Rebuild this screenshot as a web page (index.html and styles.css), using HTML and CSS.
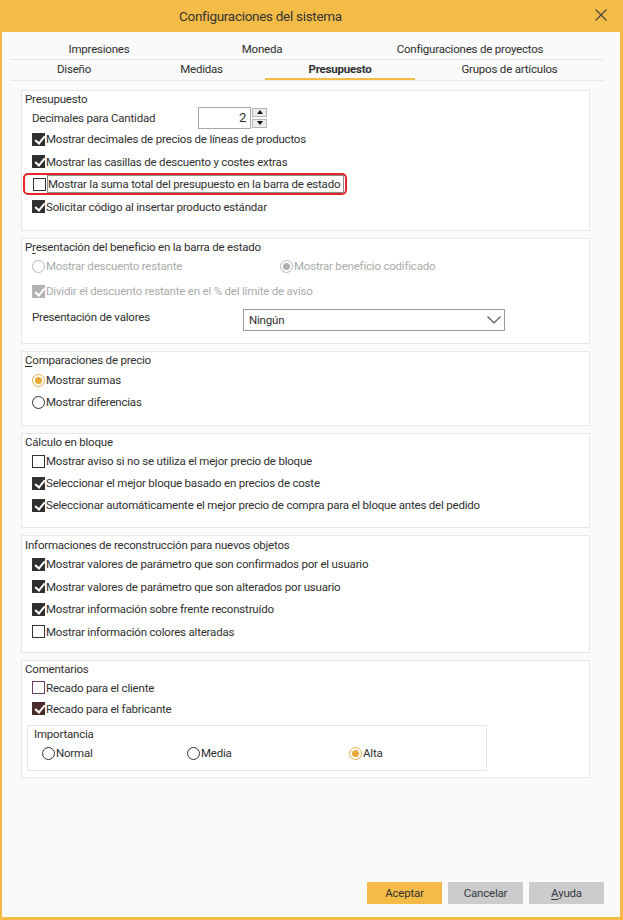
FILE: index.html
```html
<!DOCTYPE html>
<html lang="es">
<head>
  <meta charset="UTF-8" />
  <meta name="viewport" content="width=device-width, initial-scale=1.0" />
  <title>Configuraciones del sistema</title>
  <link rel="stylesheet" href="styles.css">
</head>
<body>
  <div class="dialog">
    <div class="titlebar">
      <span class="title">Configuraciones del sistema</span>
      <svg class="close" width="12" height="12" viewBox="0 0 12 12">
        <path d="M0.5 0.5 L11.5 11.5 M11.5 0.5 L0.5 11.5" stroke="#444" stroke-width="1.1" fill="none"/>
      </svg>
    </div>

    <div class="tabs">
      <div class="tab-row">
        <div class="tab w178">Impresiones</div>
        <div class="tab w148">Moneda</div>
        <div class="tab w268">Configuraciones de proyectos</div>
      </div>
      <div class="tab-row">
        <div class="tab w128">Diseño</div>
        <div class="tab w127">Medidas</div>
        <div class="tab w150 active">Presupuesto</div>
        <div class="tab w189">Grupos de artículos</div>
      </div>
    </div>

    <div class="content">
      <div class="group g-budget">
        <div class="group-title">Presupuesto</div>
        <div class="row spin-row">
          <span class="field-label">Decimales para Cantidad</span>
          <div class="spinner">
            <div class="spin-value">2</div>
            <div class="spin-buttons">
              <div class="spin-btn"><span class="tri up"></span></div>
              <div class="spin-btn"><span class="tri down"></span></div>
            </div>
          </div>
        </div>
        <div class="row"><span class="cb on"></span><span class="lbl">Mostrar decimales de precios de líneas de productos</span></div>
        <div class="row"><span class="cb on"></span><span class="lbl">Mostrar las casillas de descuento y costes extras</span></div>
        <div class="row highlight"><span class="cb"></span><span class="lbl focus">Mostrar la suma total del presupuesto en la barra de estado</span></div>
        <div class="row"><span class="cb on"></span><span class="lbl">Solicitar código al insertar producto estándar</span></div>
      </div>

      <div class="group g-benefit">
        <div class="group-title">P<u>r</u>esentación del beneficio en la barra de estado</div>
        <div class="row disabled">
          <div class="col-248"><span class="rb"></span><span class="lbl">Mostrar descuento restante</span></div>
          <div class="col"><span class="rb on"></span><span class="lbl">Mostrar beneficio codificado</span></div>
        </div>
        <div class="row disabled split"><span class="cb on"></span><span class="lbl">Dividir el descuento restante en el % del límite de aviso</span></div>
        <div class="select-row">
          <span class="select-label">Presentación de valores</span>
          <div class="select">
            <span>Ningún</span>
            <svg width="14" height="8" viewBox="0 0 14 8"><path d="M0.5 0.5 L7 7 L13.5 0.5" stroke="#555" stroke-width="1.1" fill="none"/></svg>
          </div>
        </div>
      </div>

      <div class="group">
        <div class="group-title"><u>C</u>omparaciones de precio</div>
        <div class="row first-short"><span class="rb on"></span><span class="lbl">Mostrar sumas</span></div>
        <div class="row tall"><span class="rb"></span><span class="lbl">Mostrar diferencias</span></div>
      </div>

      <div class="group">
        <div class="group-title">Cálculo en bloque</div>
        <div class="row"><span class="cb"></span><span class="lbl">Mostrar aviso si no se utiliza el mejor precio de bloque</span></div>
        <div class="row"><span class="cb on"></span><span class="lbl">Seleccionar el mejor bloque basado en precios de coste</span></div>
        <div class="row"><span class="cb on"></span><span class="lbl">Seleccionar automáticamente el mejor precio de compra para el bloque antes del pedido</span></div>
      </div>

      <div class="group g-rebuild">
        <div class="group-title">Informaciones de reconstrucción para nuevos objetos</div>
        <div class="row"><span class="cb on"></span><span class="lbl">Mostrar valores de parámetro que son confirmados por el usuario</span></div>
        <div class="row"><span class="cb on"></span><span class="lbl">Mostrar valores de parámetro que son alterados por usuario</span></div>
        <div class="row"><span class="cb on"></span><span class="lbl">Mostrar información sobre frente reconstruído</span></div>
        <div class="row"><span class="cb"></span><span class="lbl">Mostrar información colores alteradas</span></div>
      </div>

      <div class="group g-comments">
        <div class="group-title">Comentarios</div>
        <div class="row short"><span class="cb hover"></span><span class="lbl">Recado para el cliente</span></div>
        <div class="row short"><span class="cb on pressed"></span><span class="lbl">Recado para el fabricante</span></div>
        <div class="subgroup">
          <div class="group-title">Importancia</div>
          <div class="radio-line">
            <div class="col-145"><span class="rb"></span><span class="lbl">Normal</span></div>
            <div class="col-162"><span class="rb"></span><span class="lbl">Media</span></div>
            <div class="col"><span class="rb on"></span><span class="lbl">Alta</span></div>
          </div>
        </div>
      </div>
    </div>

    <div class="buttons">
      <div class="btn primary">Aceptar</div>
      <div class="btn">Cancelar</div>
      <div class="btn"><u>A</u>yuda</div>
    </div>
  </div>
</body>
</html>
```

FILE: styles.css
```css
* {
  box-sizing: border-box;
}
body {
  margin: 0;
  font-family: Roboto, "Liberation Sans", sans-serif;
  font-size: 11.5px;
  letter-spacing: -0.2px;
  color: #2f2f2f;
  background: #ffffff;
}
u {
  text-decoration-thickness: 1px;
  text-underline-offset: 2px;
}
.dialog {
  width: 623px;
  height: 920px;
  border: solid #f4bc47;
  border-width: 0 3px 3px 2px;
  background: #fafafa;
  display: flex;
  flex-direction: column;
}
.titlebar {
  height: 32px;
  background: #f4bc47;
  display: flex;
  align-items: center;
}
.title {
  margin-left: 177px;
  font-size: 13.5px;
  letter-spacing: -0.3px;
  color: #333;
}
.close {
  margin-left: auto;
  margin-right: 13px;
  margin-top: -3px;
}

/* tabs */
.tabs {
  margin: 7px 16px 0 8px;
}
.tab-row {
  display: flex;
  border-bottom: 1px solid #e8e8e8;
}
.tab {
  height: 20px;
  line-height: 20px;
  text-align: center;
  color: #2f2f2f;
}
.tab-row + .tab-row .tab {
  line-height: 19px;
}
.tab.active {
  font-weight: bold;
  box-shadow: inset 0 -2px 0 #f4bc47;
}
.w178 { width: 178px; }
.w148 { width: 148px; }
.w268 { width: 268px; }
.w128 { width: 128px; }
.w127 { width: 127px; }
.w150 { width: 150px; }
.w189 { width: 189px; }

/* groups */
.content {
  padding: 9px 30px 0 19px;
  display: flex;
  flex-direction: column;
  gap: 7px;
}
.group {
  background: #fff;
  border: 1px solid #e6e6e6;
  padding-bottom: 11px;
}
.group-title {
  height: 16px;
  line-height: 16px;
  padding-left: 3px;
  color: #2f2f2f;
}
.row {
  height: 22px;
  display: flex;
  align-items: center;
  padding-left: 10px;
}
.g-budget .row {
  height: 22.5px;
}
.g-budget .spin-row {
  height: 21px;
}
.g-budget {
  padding-bottom: 12px;
}
.g-rebuild {
  padding-top: 1px;
  padding-bottom: 9px;
}
.g-rebuild .row {
  height: 22.5px;
}
.row.tall {
  height: 24px;
}
.row.split {
  height: 24px;
  margin-top: 2px;
}
.row.short {
  height: 21px;
}
.row.first-short {
  height: 20px;
  margin-top: 2px;
}
.lbl {
  margin-left: 1px;
  white-space: nowrap;
}
.g-budget .row.highlight {
  width: 324px;
  height: 22px;
  margin: 0 0 0.5px 1px;
  padding-left: 8px;
  border: 2px solid #e3262b;
  border-radius: 5px;
}
.lbl.focus {
  border: 1px solid #8c8c8c;
  padding: 1px 0 1px 0;
  line-height: 14px;
  width: 297px;
}

/* check boxes */
.cb {
  width: 13px;
  height: 13px;
  flex: none;
  border: 1px solid #333;
  background: #fff;
  position: relative;
}
.cb.on {
  background: #2f2f2f;
}
.cb.on::after {
  content: "";
  position: absolute;
  left: 4px;
  top: 0px;
  width: 4px;
  height: 8px;
  border: solid #fff;
  border-width: 0 2px 2px 0;
  transform: rotate(40deg);
}
.cb.hover {
  border-color: #6b3d6b;
}
.cb.pressed {
  background: #4a2c2c;
  border-color: #4a2c2c;
}
.disabled {
  color: #ababab;
}
.disabled .cb {
  border-color: #b3b3b3;
}
.disabled .cb.on {
  background: #b3b3b3;
}

/* radio buttons */
.rb {
  width: 13px;
  height: 13px;
  flex: none;
  border: 1px solid #333;
  border-radius: 50%;
  background: #fff;
  position: relative;
}
.rb.on {
  border-color: #e5ad4a;
}
.rb.on::after {
  content: "";
  position: absolute;
  left: 2px;
  top: 2px;
  width: 7px;
  height: 7px;
  border-radius: 50%;
  background: #e8aa38;
}
.disabled .rb {
  border-color: #b8b8b8;
}
.disabled .rb.on::after {
  background: #b0b0b0;
}
.col-248, .col-145, .col-162, .col {
  display: flex;
  align-items: center;
}
.col-248 { width: 248px; }
.col-145 { width: 145px; }
.col-162 { width: 162px; }

/* spinner */
.field-label {
  width: 166px;
}
.spinner {
  display: flex;
  align-items: stretch;
  height: 22px;
}
.spin-value {
  width: 53px;
  border: 1px solid #a8a8a8;
  text-align: right;
  padding-right: 4px;
  line-height: 20px;
  font-size: 13px;
  background: #fff;
}
.spin-buttons {
  display: flex;
  flex-direction: column;
  justify-content: space-between;
  margin-left: 1px;
  padding: 1px 0;
}
.spin-btn {
  width: 15px;
  height: 9px;
  background: #ececec;
  border: 1px solid #b5b5b5;
  display: flex;
  align-items: center;
  justify-content: center;
}
.tri {
  width: 0;
  height: 0;
  border-left: 3.5px solid transparent;
  border-right: 3.5px solid transparent;
}
.tri.up {
  border-bottom: 4px solid #111;
}
.tri.down {
  border-top: 4px solid #111;
}

/* select */
.select-row {
  display: flex;
  align-items: flex-start;
  padding-left: 10px;
  margin-top: 6px;
  margin-bottom: 1px;
}
.select-label {
  width: 211px;
  line-height: 16px;
}
.select {
  width: 262px;
  height: 22px;
  border: 1px solid #9a9a9a;
  background: #fff;
  display: flex;
  align-items: center;
  justify-content: space-between;
  padding: 0 3px 0 5px;
}

/* comentarios */
.g-comments {
  padding-bottom: 6px;
}
.subgroup {
  margin: 6px 0 0 5px;
  width: 460px;
  border: 1px solid #e6e6e6;
  padding-bottom: 6px;
}
.subgroup .group-title {
  padding-left: 6px;
}
.radio-line {
  display: flex;
  height: 22px;
  align-items: center;
  padding-left: 14px;
}

/* buttons */
.buttons {
  margin-top: auto;
  display: flex;
  justify-content: flex-end;
  gap: 6px;
  padding: 0 16px 13px 0;
}
.btn {
  width: 75px;
  height: 22px;
  line-height: 22px;
  text-align: center;
  background: #cccccc;
  color: #333a45;
}
.btn.primary {
  background: #f4bc47;
  color: #333;
}
```
